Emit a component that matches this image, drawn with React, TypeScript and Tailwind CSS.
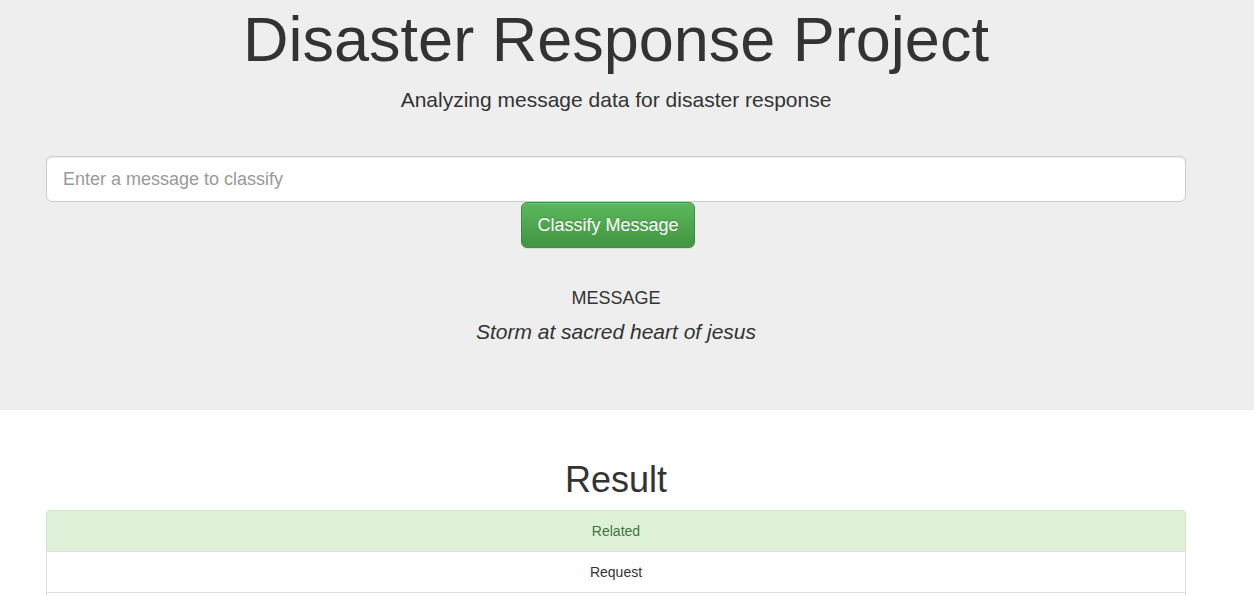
import React from "react";

const font = { fontFamily: '"Liberation Sans", Arial, Helvetica, sans-serif' };

export default function App() {
  return (
    <main className="min-h-screen w-[1254px] bg-white text-[#333]" style={font}>
      {/* Jumbotron */}
      <section className="h-[410px] w-full bg-[#eeeeee]">
        <div className="mx-0 w-[1232px]">
          <div className="mx-auto w-[1170px] px-[15px]">
            <h1 className="pt-[5px] text-center text-[63px] font-normal leading-[69px] text-[#333]">
              Disaster Response Project
            </h1>
            <p className="mt-[11px] text-center text-[21px] font-light leading-[30px] text-[#333]">
              Analyzing message data for disaster response
            </p>

            <form className="mt-[41px] flex flex-col items-center" onSubmit={(e) => e.preventDefault()}>
              <input
                type="text"
                placeholder="Enter a message to classify"
                className="h-[46px] w-full rounded-[6px] border border-[#cccccc] bg-white px-4 text-[18px] text-[#555] shadow-[inset_0_1px_1px_rgba(0,0,0,0.075)] outline-none placeholder:text-[#999]"
              />
              <button
                type="submit"
                className="mr-[16px] h-[46px] w-[174px] rounded-[6px] border border-[#3e8f3e] bg-linear-to-b from-[#5cb85c] to-[#419641] text-[18px] leading-[24px] text-white shadow-[inset_0_1px_0_rgba(255,255,255,0.15),0_1px_1px_rgba(0,0,0,0.075)] [text-shadow:0_-1px_0_rgba(0,0,0,0.2)]"
              >
                Classify Message
              </button>
            </form>

            <div className="mt-[40px] text-center">
              <h4 className="text-[18px] leading-[20px] text-[#333]">MESSAGE</h4>
              <p className="mt-[9px] text-[21px] italic leading-[30px] text-[#333]">
                Storm at sacred heart of jesus
              </p>
            </div>
          </div>
        </div>
      </section>

      {/* Results */}
      <section className="w-[1232px]">
        <div className="mx-auto w-[1170px] px-[15px]">
          <h1 className="mt-[50px] text-center text-[36px] font-normal leading-[40px] text-[#333]">Result</h1>
          <ul className="mt-[10px] text-center text-[14px] leading-[20px]">
            <li className="rounded-t-[4px] border border-[#d6e9c6] bg-[#dff0d8] px-[15px] py-[10px] text-[#3c763d]">
              Related
            </li>
            <li className="-mt-px border border-[#dddddd] bg-white px-[15px] py-[10px] text-[#333]">Request</li>
            <li className="-mt-px h-[41px] border border-[#dddddd] bg-white" />
          </ul>
        </div>
      </section>
    </main>
  );
}
